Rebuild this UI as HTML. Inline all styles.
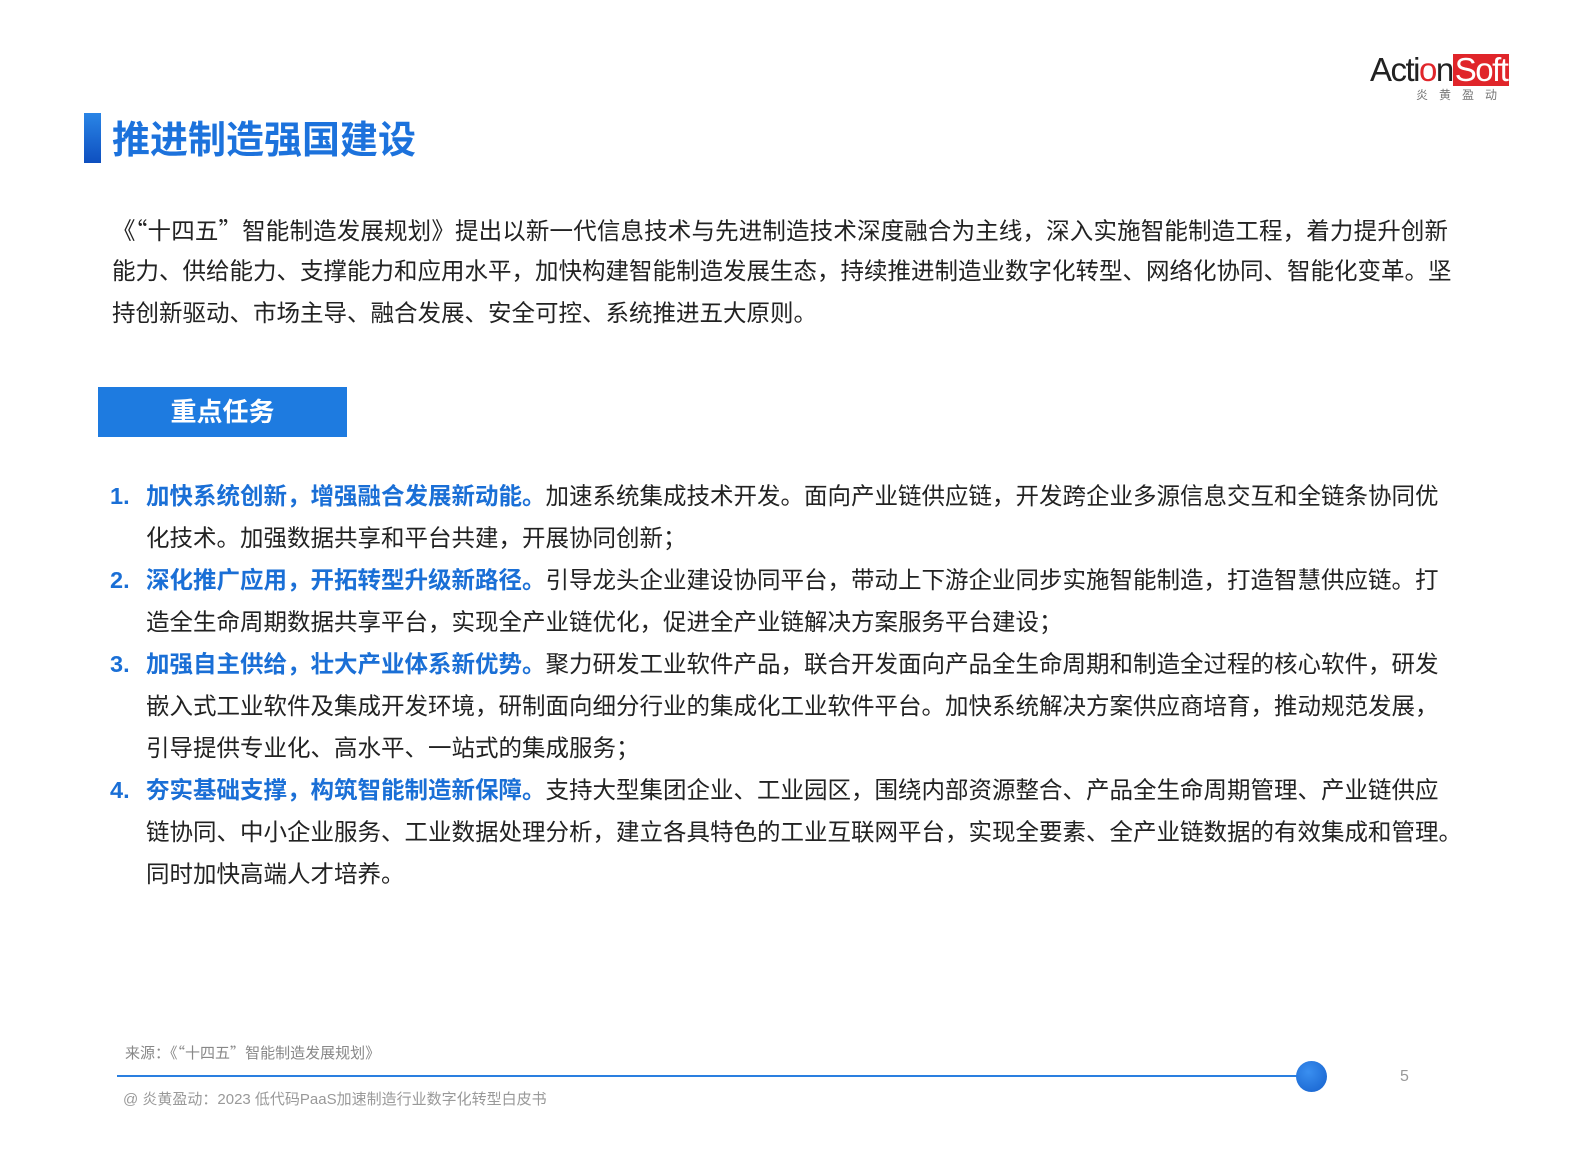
<!DOCTYPE html>
<html><head><meta charset="utf-8"><style>
*{margin:0;padding:0;box-sizing:border-box}
body{width:1587px;height:1169px;background:#fff;position:relative;overflow:hidden;font-family:"Liberation Sans","Noto Sans CJK SC",sans-serif;color:#222}
.abs{position:absolute}
.ln{position:absolute;white-space:nowrap;font-size:23.5px;line-height:30px;text-align:justify;text-align-last:justify}
.last{text-align-last:left}
.b{color:#1a6fd6;font-weight:bold}
.q{font-family:"Noto Sans CJK SC",sans-serif}
</style></head><body>
<div class="abs" style="left:1370px;top:52px;font-size:33px;letter-spacing:-1.5px;line-height:36px;color:#222">Acti<span style="color:#e0252a">o</span>n<span style="background:#e0252a;color:#fff;padding:0 2px;display:inline-block;line-height:32px">Soft</span></div>
<div class="abs" style="left:1416px;top:86px;font-size:12px;letter-spacing:11px;color:#777">炎黄盈动</div>

<div class="abs" style="left:84px;top:113px;width:17px;height:50px;background:linear-gradient(#2a85e6,#0e4fbf)"></div>
<div class="abs" style="left:112px;top:117px;font-size:38px;font-weight:bold;line-height:48px;color:#1c72dc">推进制造强国建设</div>

<div class="ln" style="left:112px;top:214px;width:1336px"><span class="q">《“</span>十四五<span class="q">”</span>智能制造发展规划》提出以新一代信息技术与先进制造技术深度融合为主线，深入实施智能制造工程，着力提升创新</div>
<div class="ln" style="left:112px;top:256px;width:1336px">能力、供给能力、支撑能力和应用水平，加快构建智能制造发展生态，持续推进制造业数字化转型、网络化协同、智能化变革。坚</div>
<div class="ln last" style="left:112px;top:298px;width:1336px">持创新驱动、市场主导、融合发展、安全可控、系统推进五大原则。</div>

<div class="abs" style="left:98px;top:387px;width:249px;height:50px;background:#1e7be0;color:#fff;font-size:26px;font-weight:bold;text-align:center;line-height:50px">重点任务</div>

<div class="ln b" style="left:110px;top:481px">1.</div>
<div class="ln" style="left:146px;top:481px;width:1282px"><span class="b">加快系统创新，增强融合发展新动能。</span>加速系统集成技术开发。面向产业链供应链，开发跨企业多源信息交互和全链条协同优</div>
<div class="ln last" style="left:146px;top:523px;width:1282px">化技术。加强数据共享和平台共建，开展协同创新；</div>
<div class="ln b" style="left:110px;top:565px">2.</div>
<div class="ln" style="left:146px;top:565px;width:1282px"><span class="b">深化推广应用，开拓转型升级新路径。</span>引导龙头企业建设协同平台，带动上下游企业同步实施智能制造，打造智慧供应链。打</div>
<div class="ln last" style="left:146px;top:607px;width:1282px">造全生命周期数据共享平台，实现全产业链优化，促进全产业链解决方案服务平台建设；</div>
<div class="ln b" style="left:110px;top:649px">3.</div>
<div class="ln" style="left:146px;top:649px;width:1282px"><span class="b">加强自主供给，壮大产业体系新优势。</span>聚力研发工业软件产品，联合开发面向产品全生命周期和制造全过程的核心软件，研发</div>
<div class="ln" style="left:146px;top:691px;width:1270px">嵌入式工业软件及集成开发环境，研制面向细分行业的集成化工业软件平台。加快系统解决方案供应商培育，推动规范发展，</div>
<div class="ln last" style="left:146px;top:733px;width:1282px">引导提供专业化、高水平、一站式的集成服务；</div>
<div class="ln b" style="left:110px;top:775px">4.</div>
<div class="ln" style="left:146px;top:775px;width:1282px"><span class="b">夯实基础支撑，构筑智能制造新保障。</span>支持大型集团企业、工业园区，围绕内部资源整合、产品全生命周期管理、产业链供应</div>
<div class="ln" style="left:146px;top:817px;width:1292px">链协同、中小企业服务、工业数据处理分析，建立各具特色的工业互联网平台，实现全要素、全产业链数据的有效集成和管理。</div>
<div class="ln last" style="left:146px;top:859px;width:1282px">同时加快高端人才培养。</div>

<div class="abs" style="left:125px;top:1043px;font-size:15px;color:#888;line-height:20px">来源<span class="q">：《“</span>十四五<span class="q">”</span>智能制造发展规划》</div>
<div class="abs" style="left:117px;top:1075px;width:1195px;height:2px;background:#2a7fe0"></div>
<div class="abs" style="left:1296px;top:1061px;width:31px;height:31px;border-radius:50%;background:radial-gradient(circle at 40% 35%,#3a8ff0,#1560cc)"></div>
<div class="abs" style="left:1400px;top:1068px;font-size:16px;color:#999">5</div>
<div class="abs" style="left:123px;top:1090px;font-size:15px;color:#999;line-height:20px">@ 炎黄盈动：2023 低代码PaaS加速制造行业数字化转型白皮书</div>
</body></html>
